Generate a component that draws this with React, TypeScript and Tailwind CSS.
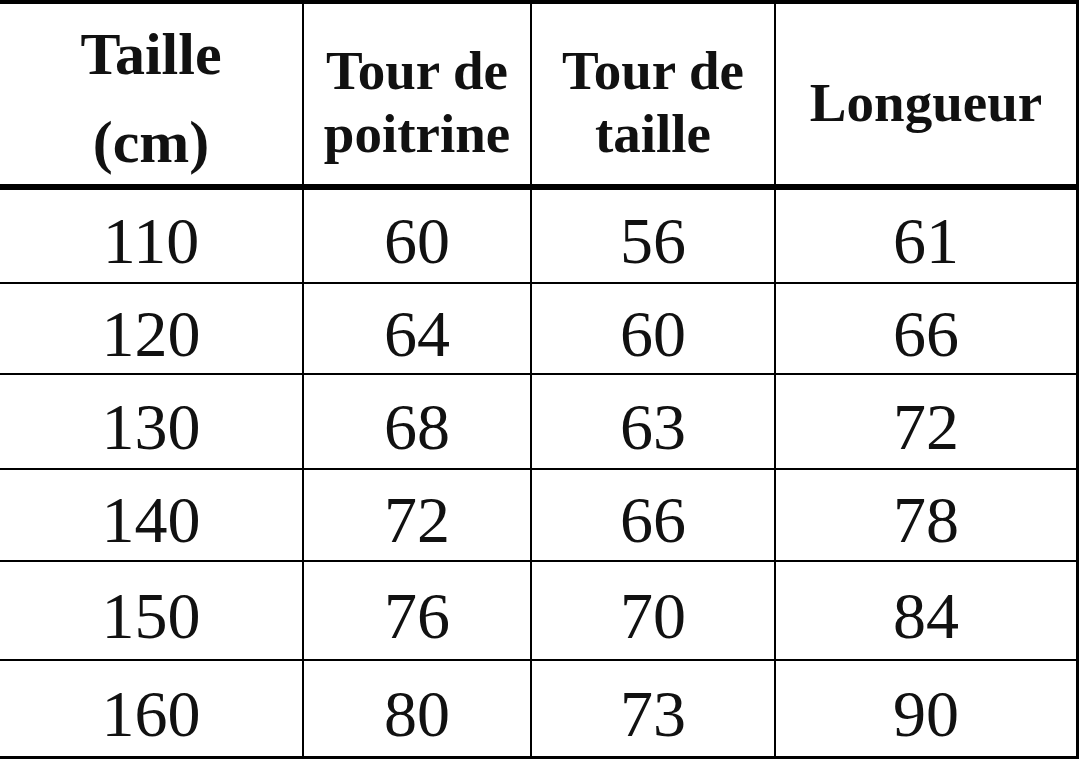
import React from "react";

const rows: [string, string, string, string][] = [
  ["110", "60", "56", "61"],
  ["120", "64", "60", "66"],
  ["130", "68", "63", "72"],
  ["140", "72", "66", "78"],
  ["150", "76", "70", "84"],
  ["160", "80", "73", "90"],
];

const rowHeights = ["h-[92px]", "h-[89px]", "h-[93px]", "h-[90px]", "h-[97px]", "h-[95px]"];

const colW = ["w-[302px]", "w-[228px]", "w-[244px]", "w-[302px]"];

export default function App() {
  return (
    <div
      className="w-[1080px] h-[759px] bg-white text-[#111] overflow-hidden"
      style={{ fontFamily: '"Liberation Serif", "Times New Roman", serif' }}
    >
      <div className="w-[1079px] border-t-[4px] border-r-[3px] border-b-[3px] border-black">
        {/* header */}
        <div className="flex h-[186px] border-b-[6px] border-black font-bold">
          <div className={`${colW[0]} flex flex-col items-center justify-center text-[60px] leading-[88px] pt-[8px]`}>
            <span>Taille</span>
            <span>(cm)</span>
          </div>
          <div className={`${colW[1]} border-l-2 border-black flex flex-col items-center justify-center text-[55px] leading-[63px] pt-[16px]`}>
            <span>Tour de</span>
            <span>poitrine</span>
          </div>
          <div className={`${colW[2]} border-l-2 border-black flex flex-col items-center justify-center text-[55px] leading-[63px] pt-[16px]`}>
            <span>Tour de</span>
            <span>taille</span>
          </div>
          <div className={`flex-1 border-l-2 border-black flex items-center justify-center text-[55px] pt-[18px]`}>
            <span>Longueur</span>
          </div>
        </div>
        {/* body */}
        {rows.map((r, i) => (
          <div
            key={i}
            className={`flex ${rowHeights[i]} ${i < rows.length - 1 ? "border-b-2" : ""} border-black text-[66px] leading-none box-content`}
          >
            {r.map((v, j) => (
              <div
                key={j}
                className={`${j === 3 ? "flex-1" : colW[j]} ${j > 0 ? "border-l-2 border-black" : ""} flex items-center justify-center pt-[10px]`}
              >
                {v}
              </div>
            ))}
          </div>
        ))}
      </div>
    </div>
  );
}
